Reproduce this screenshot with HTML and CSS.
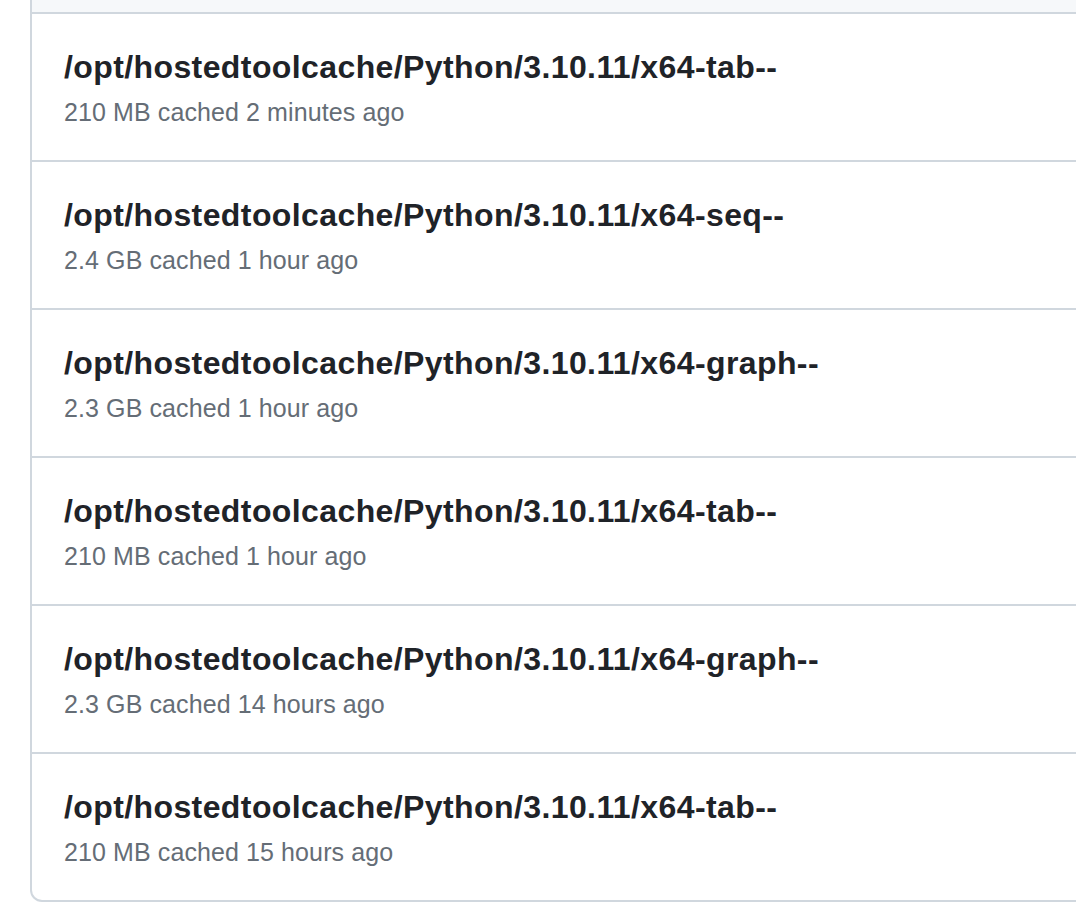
FILE: index.html
```html
<!DOCTYPE html>
<html>
<head>
    <link rel="stylesheet" href="styles.css">
</head>
<body>
    <div class="box">
        <div class="box-header"></div>
        <ul class="cache-list">
            <li class="cache-row">
                <a class="cache-key" href="#">/opt/hostedtoolcache/Python/3.10.11/x64-tab--</a>
                <div class="cache-meta">210 MB cached 2 minutes ago</div>
            </li>
            <li class="cache-row">
                <a class="cache-key" href="#">/opt/hostedtoolcache/Python/3.10.11/x64-seq--</a>
                <div class="cache-meta">2.4 GB cached 1 hour ago</div>
            </li>
            <li class="cache-row">
                <a class="cache-key" href="#">/opt/hostedtoolcache/Python/3.10.11/x64-graph--</a>
                <div class="cache-meta">2.3 GB cached 1 hour ago</div>
            </li>
            <li class="cache-row">
                <a class="cache-key" href="#">/opt/hostedtoolcache/Python/3.10.11/x64-tab--</a>
                <div class="cache-meta">210 MB cached 1 hour ago</div>
            </li>
            <li class="cache-row">
                <a class="cache-key" href="#">/opt/hostedtoolcache/Python/3.10.11/x64-graph--</a>
                <div class="cache-meta">2.3 GB cached 14 hours ago</div>
            </li>
            <li class="cache-row">
                <a class="cache-key" href="#">/opt/hostedtoolcache/Python/3.10.11/x64-tab--</a>
                <div class="cache-meta">210 MB cached 15 hours ago</div>
            </li>
        </ul>
    </div>
</body>
</html>
```

FILE: styles.css
```css
/* Cache list */
body {
    margin: 0;
    overflow: hidden;
    background: #fff;
    font-family: "Liberation Sans", Arial, sans-serif;
}

.box {
    margin-left: 30px;
    width: 1090px;
    border: 2px solid #d0d7de;
    border-top: none;
    border-radius: 0 0 12px 12px;
}

.box-header {
    height: 12px;
    background-color: #f6f8fa;
}

.cache-list {
    list-style: none;
    margin: 0;
    padding: 0;
}

.cache-row {
    border-top: 2px solid #d0d7de;
    padding: 32px 32px 30px;
}

.cache-key {
    display: block;
    color: #1f2328;
    font-size: 32px;
    font-weight: bold;
    letter-spacing: 0.4px;
    line-height: 42px;
    text-decoration: none;
    margin-bottom: 6px;
}

.cache-meta {
    color: #656d76;
    font-size: 25px;
    letter-spacing: 0.1px;
    line-height: 36px;
}
```
